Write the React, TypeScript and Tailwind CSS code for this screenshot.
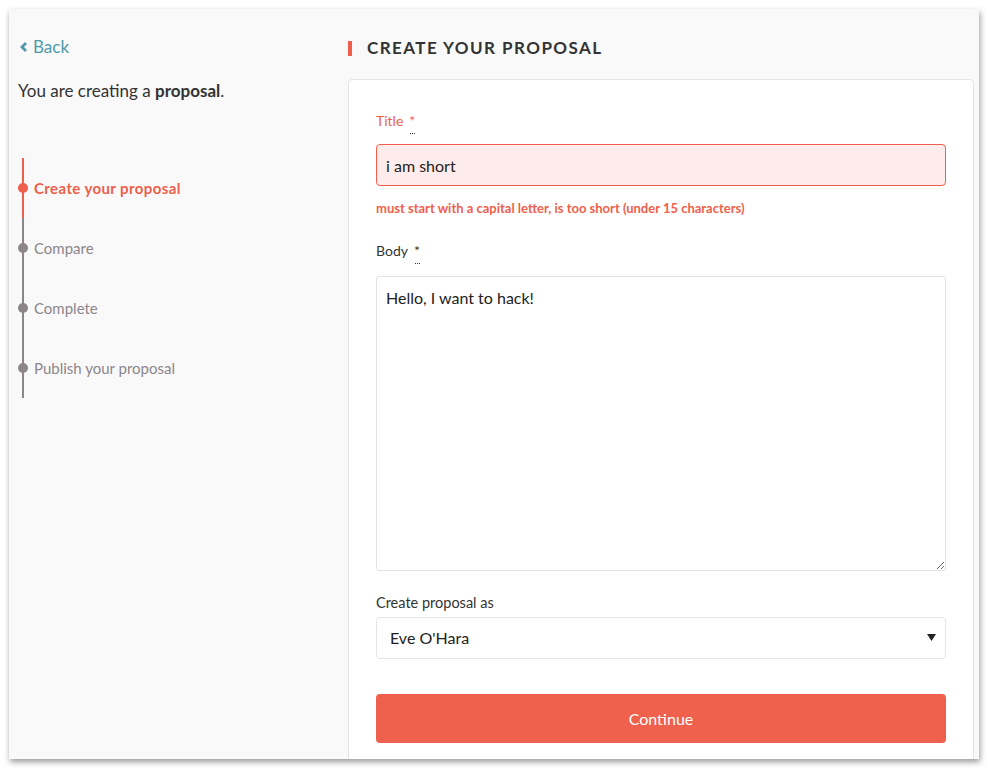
import React from 'react';

const steps = ['Create your proposal', 'Compare', 'Complete', 'Publish your proposal'];

const Required = () => (
  <abbr title="required" className="ml-[6px] no-underline relative">
    *
    <span className="absolute left-[1px] top-[21px] w-[5px] border-b border-dotted border-[#333]" />
  </abbr>
);

const App = () => {
  return (
    <div className="w-[988px] h-[774px] bg-white pt-[9px] pl-[9px]" style={{ fontFamily: 'Lato, "Open Sans", sans-serif' }}>
      <div className="w-[970px] h-[750px] bg-[#f9f9f9] flex overflow-hidden shadow-[1px_3px_6px_rgba(0,0,0,0.4)]">
        <aside className="w-[339px] shrink-0 pt-[26px] pl-[9px]">
          <a href="#" className="flex items-center gap-[5px] text-[17px] leading-6 text-[#4f9aa9] ml-[2px]">
            <svg width="8" height="10" viewBox="0 0 8 10">
              <path d="M6 1 L2 5 L6 9" stroke="#4f9aa9" strokeWidth="2.8" fill="none" />
            </svg>
            Back
          </a>
          <p className="mt-[20px] text-[17px] leading-6 text-[#333]">
            You are creating a <strong className="font-bold">proposal</strong>.
          </p>
          <ol className="mt-[55px] ml-[4px]">
            {steps.map((s, i) => (
              <li
                key={s}
                className={`relative h-[60px] flex items-center pl-[10px] border-l-2 text-[15px] ${
                  i === 0
                    ? 'border-[#ef5f4b] text-[#ef5f4b] font-bold tracking-[0.4px]'
                    : 'border-[#8c868b] text-[#8c868b]'
                }`}
              >
                <span
                  className={`absolute left-[-6px] top-[25px] w-[10px] h-[10px] rounded-full ${
                    i === 0 ? 'bg-[#ef5f4b]' : 'bg-[#8c868b]'
                  }`}
                />
                {s}
              </li>
            ))}
          </ol>
        </aside>

        <main className="w-[626px] shrink-0">
          <h1 className="h-[70px] flex items-center pt-[8px] gap-[15px]">
            <span className="w-[4px] h-[15px] bg-[#ef5f4b]" />
            <span className="text-[17px] font-bold tracking-[0.085em] text-[#333]">CREATE YOUR PROPOSAL</span>
          </h1>
          <form className="bg-white border border-[#e3e3e3] rounded-[4px] px-[27px] pt-[31px] pb-[40px] h-[700px]">
            <label className="block text-[14px] leading-5 text-[#ef5f4b]">
              Title
              <Required />
            </label>
            <input
              defaultValue="i am short"
              className="mt-[13px] w-full h-[42px] rounded-[4px] border border-[#ef5f4b] bg-[#fdeceb] px-[9px] text-[16px] text-[#222] outline-none"
            />
            <p className="mt-[14px] text-[13px] leading-4 font-bold text-[#ef5f4b]">
              must start with a capital letter, is too short (under 15 characters)
            </p>

            <label className="block mt-[25px] text-[14px] leading-5 text-[#333]">
              Body
              <Required />
            </label>
            <textarea
              defaultValue="Hello, I want to hack!"
              className="mt-[15px] block w-full h-[295px] rounded-[3px] border border-[#e3e3e3] px-[9px] py-[9px] text-[16px] text-[#222] outline-none"
            />

            <label className="block mt-[22px] text-[14.5px] leading-5 text-[#333]">Create proposal as</label>
            <div className="relative mt-[4px]">
              <select className="w-full h-[42px] appearance-none rounded-[4px] border border-[#e5e5e5] bg-white pl-[13px] text-[16px] text-[#222] outline-none">
                <option>Eve O'Hara</option>
              </select>
              <svg className="absolute right-[10px] top-[17px]" width="9" height="7" viewBox="0 0 9 7">
                <path d="M0 0 H9 L4.5 7 Z" fill="#222" />
              </svg>
            </div>

            <button
              type="submit"
              className="mt-[35px] w-full h-[49px] rounded-[4px] bg-[#ef604d] text-white text-[16px]"
            >
              Continue
            </button>
          </form>
        </main>
      </div>
    </div>
  );
};

export default App;
